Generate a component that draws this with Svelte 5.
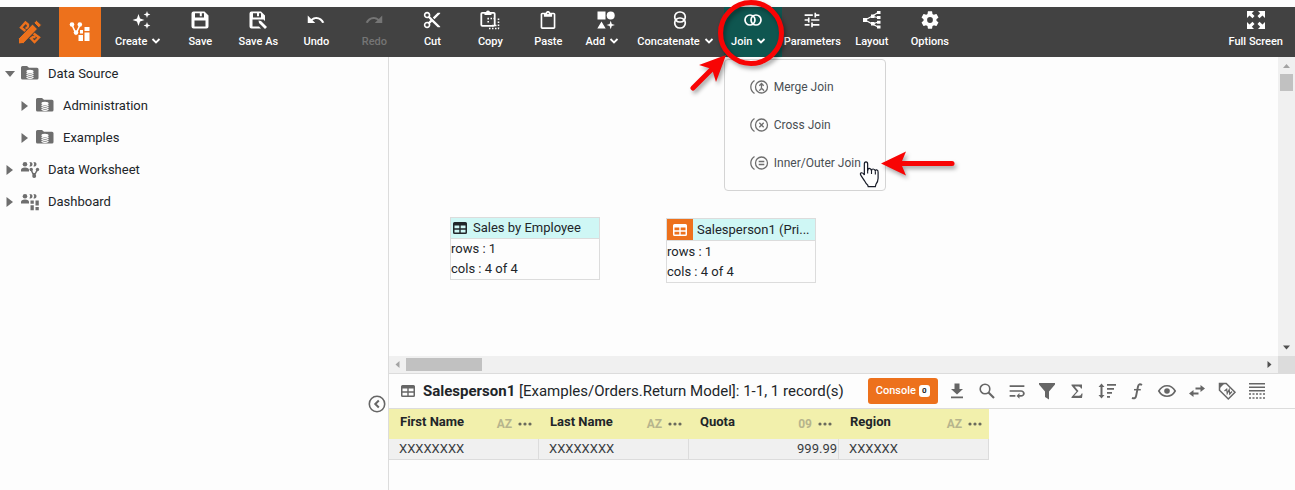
<script>
  const star = (x, y, r) => {
    const k = r * 0.26;
    return `<path d="M${x} ${y - r}L${x + k} ${y - k}L${x + r} ${y}L${x + k} ${y + k}L${x} ${y + r}L${x - k} ${y + k}L${x - r} ${y}L${x - k} ${y - k}z"/>`;
  };
  const g = (w, body) => `<g fill="none" stroke="currentColor" stroke-width="${w}">${body}</g>`;
  const drum = '<g fill="none" stroke="#fdfdfd" stroke-width="1.2"><ellipse cx="9" cy="6.500" rx="3" ry="1.200" fill="#fdfdfd"/><path d="M5.500 8.300q3.500 2.200 7 0M5.500 10.300q3.500 2.200 7 0M5.500 12.200q3.500 2.200 7 0"/></g>';
  const people = '<circle cx="4" cy="3.2" r="2.3"/><path d="M0 10.5V9q0-2.600 4-2.600t4 2.600v1.500z"/><path d="M8.500 1q3 0 3 2.300t-3 2.300q1.600-2.300 0-4.600zM12.500 1q3 0 3 2.300t-3 2.300q1.600-2.300 0-4.600z"/>';
  const venn = '<path d="M4.500 2.500Q.8 5 .8 9T4.500 15.500"/><circle cx="11.500" cy="9" r="6"/>';

  const icons = {
    create: [18, star(5.5, 9, 6) + star(14, 3.5, 3.4) + star(14, 14.5, 3.4)],
    save: [18, '<path fill-rule="evenodd" d="M2.500.5h11L17.500 4.500V15.500a2 2 0 0 1-2 2H2.500a2 2 0 0 1-2-2V2.500A2 2 0 0 1 2.500.5zM4 2.300v4.200h9V2.300h-2.200v3H8.800v-3zM3.500 9.500v6h11v-6z"/>'],
    saveas: [18, '<path fill-rule="evenodd" d="M2.500.5h9.500L16 4.500V10l-1.500-1.500H3.500v7H10l2 2H2.500a2 2 0 0 1-2-2V2.500a2 2 0 0 1 2-2zM4 2.300v4.200h8V2.300h-2v3H8v-3z"/><path d="M9.500 9.500l2.500.6 6 6-2 2-6-6z"/>'],
    undo: [24, '<path d="M12.500 8c-2.650 0-5.050.99-6.900 2.600L1 6v10h10l-3.620-3.620c1.390-1.160 3.160-1.880 5.120-1.880 3.540 0 6.550 2.310 7.600 5.500l3-.78C21.080 11.030 17.150 8 12.500 8z"/>'],
    redo: [24, '<g transform="translate(24 0) scale(-1 1)"><path d="M12.500 8c-2.650 0-5.050.99-6.900 2.600L1 6v10h10l-3.620-3.620c1.390-1.160 3.160-1.880 5.120-1.880 3.540 0 6.550 2.310 7.600 5.500l3-.78C21.080 11.030 17.150 8 12.500 8z"/></g>'],
    cut: [22, '<g transform="translate(-1 -1)"><path d="M9.640 7.640c.23-.5.36-1.050.36-1.640 0-2.210-1.790-4-4-4S2 3.790 2 6s1.790 4 4 4c.59 0 1.140-.13 1.640-.36L10 12l-2.360 2.360C7.140 14.130 6.590 14 6 14c-2.210 0-4 1.790-4 4s1.790 4 4 4 4-1.790 4-4c0-.59-.13-1.140-.36-1.640L12 14l7 7h3v-1L9.640 7.640zM6 8c-1.100 0-2-.89-2-2s.9-2 2-2 2 .89 2 2-.9 2-2 2zm0 12c-1.100 0-2-.89-2-2s.9-2 2-2 2 .89 2 2-.9 2-2 2zM19 3l-6 6 2 2 7-7V3z"/></g>'],
    copy: [18, g(1.8, '<rect x=".3" y="1.800" width="13.400" height="13" rx="1"/>') + '<path d="M3.500 4V1.500H5a2 2 0 0 1 4 0h1.500V4z"/>' + g(1.6, '<path stroke-dasharray="1.500 1.500" d="M6.500 7.500H14M7.200 7v5M8 17.500h10M17.500 7.500v10M11 14.500h6"/>')],
    paste: [22, '<g transform="translate(-1 0)"><path d="M19 2h-4.180C14.400.84 13.300 0 12 0c-1.300 0-2.400.84-2.820 2H5c-1.100 0-2 .9-2 2v16c0 1.100.9 2 2 2h14c1.100 0 2-.9 2-2V4c0-1.100-.9-2-2-2zm-7 0c.55 0 1 .45 1 1s-.45 1-1 1-1-.45-1-1 .45-1 1-1zm7 18H5V4h2v3h10V4h2v16z"/></g>'],
    add: [18, '<path d="M.5.5h8v8h-8zM4.500 10.500L8.700 17.500H.3z"/><circle cx="13.700" cy="4.500" r="4"/>' + star(13.7, 14, 4.2)],
    concat: [18, g(1.7, '<rect x="3.700" y="1" width="10.600" height="10" rx="5"/><rect x="3.700" y="7" width="10.600" height="10" rx="5"/>')],
    join: [18, g(1.7, '<circle cx="6" cy="9" r="5"/><circle cx="12" cy="9" r="5"/>')],
    params: [22, '<g transform="translate(-1 -1)"><path d="M3 17v2h6v-2H3zM3 5v2h10V5H3zm10 16v-2h8v-2h-8v-2h-2v6h2zM7 9v2H3v2h4v2h2V9H7zm14 4v-2H11v2h10zm-6-4h2V7h4V5h-4V3h-2v6z"/></g>'],
    layout: [18, '<path d="M0 7h4v4H0zM8 3.500h3.500V7H8zM8 11h3.500v3.500H8zM14 0h3.500v3H14zM14 5h3.500v3H14zM14 9.700h3.500v3H14zM14 14.500h3.500v3H14z"/>' + g(1.2, '<path d="M2 9L9.500 5 15 1.500M9.500 5.500L15 6.500M2 9l7.500 4L15 11M9.500 13L15 16"/>')],
    options: [20, '<g transform="translate(-2 -2)"><path fill-rule="evenodd" d="M19.140 12.940c.04-.3.060-.61.060-.94 0-.32-.02-.64-.07-.94l2.030-1.580c.18-.14.23-.41.120-.61l-1.920-3.320c-.12-.22-.37-.29-.59-.22l-2.390.96c-.5-.38-1.030-.7-1.620-.94l-.36-2.540c-.04-.24-.24-.41-.48-.41h-3.840c-.24 0-.43.17-.47.41l-.36 2.540c-.59.24-1.130.57-1.620.94l-2.390-.96c-.22-.08-.47 0-.59.22L2.740 8.870c-.12.210-.08.47.120.61l2.030 1.580c-.05.3-.09.63-.09.94s.02.64.070.94l-2.030 1.580c-.18.140-.23.410-.12.610l1.920 3.320c.12.220.37.290.59.220l2.390-.96c.5.38 1.030.7 1.620.94l.36 2.540c.05.240.24.410.48.410h3.840c.24 0 .44-.17.470-.41l.36-2.540c.59-.24 1.130-.56 1.620-.94l2.390.96c.22.080.47 0 .59-.22l1.920-3.320c.12-.22.070-.47-.12-.61l-2.010-1.580zM12 15.200a3.200 3.200 0 1 1 0-6.400 3.200 3.200 0 0 1 0 6.400z"/></g>'],
    full: [18, '<path d="M0 0h7L4.800 2.200 7.500 5 5.500 7.200 2.500 4.500 0 7zM18 0v7l-2.500-2.500-3 2.700-2-2.200 2.700-2.800L11 0zM0 18v-7l2.500 2.500 3-2.700 2 2.200-2.700 2.800L7 18zM18 18h-7l2.200-2.200-2.700-2.800 2-2.200 3 2.700L18 11z"/>'],
    logo: [24, g(2.4, '<path d="M8.500 12L3 7.500 7.500 2.500 10 4.500v3.500H7.500M15 13l6 4.500-4.500 4.500-3.500-3.500 2-1.500h2.500"/>') + '<path stroke="#424242" stroke-width="1" d="M.5 18.500L14.500 4l5 5L5.500 23.500.5 24zM15.800 2.800L18.500.3 23.500 5l-2.700 2.800z"/>'],
    board: [20, g(1.6, '<path d="M2 3l4 8.500L10 3"/>') + '<circle cx="2" cy="2.500" r="2.300"/><circle cx="9.800" cy="2.500" r="2.300"/><circle cx="6" cy="10.500" r="2.300"/><path d="M8.500 13h4.500v6H8.500zM14.500 5h5v4h-5zM14.500 10.500h5V19h-5zM10 8h3v3.500h-3z"/>'],
    folder: [18, '<path d="M0 2.500A1.500 1.500 0 0 1 1.500 1H6l2 1.700h8A1.500 1.500 0 0 1 17.500 4.200v8.800A1.500 1.500 0 0 1 16 14.500H1.500A1.500 1.500 0 0 1 0 13z"/>' + drum],
    worksheet: [18, people + g(1.5, '<path d="M10 8.500l3 6.500 3.500-6.500M13 12v4"/>') + '<circle cx="10.200" cy="8.500" r="1.700"/><circle cx="16.500" cy="8.500" r="1.700"/><circle cx="13.200" cy="15" r="2"/>'],
    dashboard: [18, people + '<path d="M9.500 7.500h3.300v3.300H9.500zM14.500 7.500h3.300v5h-3.300zM9.500 12.300h3.300v5H9.500zM14.500 14h3.300v3.300h-3.300z"/>'],
    merge: [18, g(1.3, venn + '<path d="M9 12.500q2.500-1 2.500-3V5.500M9.300 7.700L11.500 5.500l2.200 2.200M12 10.500l2 2.200"/>')],
    cross: [18, g(1.3, venn + '<path d="M9.300 6.800l4.400 4.400M13.700 6.800l-4.400 4.400"/>')],
    inner: [18, g(1.3, venn + '<path d="M8.700 7.500h5.600M8.700 10.500h5.600"/>')],
    grid: [14, '<path fill-rule="evenodd" d="M1.500 1h11A1.500 1.500 0 0 1 14 2.500v9a1.500 1.500 0 0 1-1.500 1.500h-11A1.500 1.500 0 0 1 0 11.500v-9A1.500 1.500 0 0 1 1.500 1zM1.500 4.500v2.800h4.800V4.500zM7.700 4.500v2.800h4.800V4.500zM1.500 8.700v2.800h4.800V8.700zM7.700 8.700v2.800h4.800V8.700z"/>'],
    download: [18, '<path d="M6.500 1.500h5V7H15l-6 5.500L3 7h3.500zM3 14.500h12v1.700H3z"/>'],
    search: [18, g(1.6, '<circle cx="7" cy="7" r="4.800"/>') + g(2.1, '<path d="M10.500 10.500l5.500 5.500"/>')],
    wrap: [22, '<g transform="translate(-1 -1)"><path d="M3 19h7v-2H3v2zM21 5H3v2h18V5zm-4 6H3v2h14.250c1.100 0 2 .9 2 2s-.9 2-2 2H15v-2.500l-3.500 3.500 3.500 3.500v-2.500h2c2.210 0 4.500-1.790 4.500-4s-2.290-4-4.500-4z"/></g>'],
    filter: [18, '<path d="M1 1h16v1.500L11 9.500V17.500L7 15V9.500L1 2.500z"/>'],
    sigma: [18, '<path d="M3.500 2.500H14v4h-1q-.5-2-2.500-2H6.700L10.500 9l-4.300 4.700H11q2 0 2.600-2.200h1L14 16H3.500v-1l5-5.500-5-6z"/>'],
    spacing: [18, '<path d="M3.500 1.500L6.500 5H4.500v8h2l-3 3.500L.5 13h2V5h-2zM9 2h9v1.700H9zM9 6h7v1.700H9zM9 10h5v1.700H9zM9 14h3v1.700H9z"/>'],
    fn: [18, g(1.9, '<path d="M14 3Q10.800 1 10 4.500L8.200 13.500Q7.500 17.500 4 15.800"/>') + g(1.5, '<path d="M6 7.700h6.800"/>')],
    eye: [18, g(1.6, '<path d="M.8 9Q3.800 3.700 9 3.700T17.200 9Q14.200 14.300 9 14.300T.8 9z"/>') + '<circle cx="9" cy="9" r="2.800"/>'],
    swap: [18, '<path d="M12.500 3L17 6.500 12.500 10V7.400H7.500V5.600H12.500zM5.500 8L1 11.500 5.500 15V12.400H10.500V10.600H5.500z"/>'],
    tag: [18, g(1.5, '<path d="M1.500 1.500h6.700L17 10.300 10.300 17 1.500 8.200z"/>') + g(1.2, '<path d="M6.500 9l2.200-1.800.5 4.300 2-4 .5 4.500 2.300-2.500"/>') + '<path d="M1 1h6L1 7z"/>'],
    rows: [18, '<path d="M1 1h16v1.600H1zM1 4.500h16v1.600H1zM1 8h16v1.600H1z"/>' + g(1.5, '<path stroke-dasharray="2 1.500" d="M1 12h16M1 16h16"/>')],
    collapse: [18, g(1.6, '<circle cx="9" cy="9" r="7.700"/>') + g(2, '<path d="M10.800 5.500L7.300 9l3.500 3.500"/>')]
  };

  const tools = [
    ['create', 'Create', true], ['save', 'Save'], ['saveas', 'Save As'], ['undo', 'Undo'],
    ['redo', 'Redo'], ['cut', 'Cut'], ['copy', 'Copy'], ['paste', 'Paste'], ['add', 'Add', true],
    ['concat', 'Concatenate', true], ['join', 'Join', true], ['params', 'Parameters'],
    ['layout', 'Layout'], ['options', 'Options']
  ];
  const joins = [['merge', 'Merge Join'], ['cross', 'Cross Join'], ['inner', 'Inner/Outer Join']];
  const tree = [
    ['folder', 'Data Source', 0, true], ['folder', 'Administration', 1], ['folder', 'Examples', 1],
    ['worksheet', 'Data Worksheet', 0], ['dashboard', 'Dashboard', 0]
  ];
  const actions = [
    ['download', 'Export'], ['search', 'Search'], ['wrap', 'Wrap headers'], ['filter', 'Filter'],
    ['sigma', 'Aggregate'], ['spacing', 'Sort'], ['fn', 'Expression'], ['eye', 'Visibility'],
    ['swap', 'Reorder'], ['tag', 'Rename'], ['rows', 'Row limit']
  ];
  const columns = [
    ['First Name', 'AZ', 'XXXXXXXX'], ['Last Name', 'AZ', 'XXXXXXXX'],
    ['Quota', '09', '999.99'], ['Region', 'AZ', 'XXXXXX']
  ];
</script>

{#snippet icon(name, size = 18)}
  <svg class="icon" width={size} height={size} viewBox="0 0 {icons[name][0]} {icons[name][0]}" fill="currentColor" aria-hidden="true">{@html icons[name][1]}</svg>
{/snippet}

<div class="app">
  <header class="toolbar">
    <button class="brand" aria-label="Home">{@render icon('logo', 24)}</button>
    <button class="brand active" aria-label="Worksheet">{@render icon('board', 20)}</button>
    <nav class="tools">
      {#each tools as [name, label, menu]}
        <div class="slot">
          <button class="tool" class:open={name === 'join'} disabled={name === 'redo'}>
            {@render icon(name)}
            <span class="label">{label}{#if menu}<svg class="caret" width="10" height="8" viewBox="0 0 10 8" aria-hidden="true"><path d="M1.500 2L5 5.500 8.500 2" fill="none" stroke="currentColor" stroke-width="1.800" /></svg>{/if}</span>
          </button>
          {#if name === 'join'}
            <div class="menu">
              {#each joins as [kind, text]}
                <button class="choice">{@render icon(kind)}{text}</button>
              {/each}
            </div>
            <svg class="marks" width="300" height="200" viewBox="0 0 300 200" aria-hidden="true">
              <g class="red">
                <circle cx="67" cy="33" r="30.500" fill="none" stroke="#f80404" stroke-width="5" />
                <path d="M9 88L30 67" stroke="#f80404" stroke-width="5" stroke-linecap="round" />
                <path d="M42 55L32 82 28 69 15 65z" fill="#f80404" />
                <path d="M268 163.500H218" stroke="#f80404" stroke-width="5" stroke-linecap="round" />
                <path d="M197 163.500L222 151.500 217 163.500 222 175.500z" fill="#f80404" />
              </g>
              <g transform="translate(-19.300 -18) scale(1.100)">
                <path d="M181.500 165.500q0-2 1.500-2t1.500 2v6q0-2 1.500-2t2 2q0-1.500 1.500-1.500t2 2q0-1.500 1.300-1.200t1.200 2.200v5.500q0 3-2 5.500l-.5 2h-6.500l-.5-1.500q-1.500-1-3-4l-3-4.500q-1.300-2 .2-2.500t2.800 2z" fill="#fff" stroke="#181c28" stroke-width="1.100" />
                <path d="M184.500 169v5M188 171v3.500M191.500 172v3" fill="none" stroke="#181c28" />
              </g>
            </svg>
          {/if}
        </div>
      {/each}
    </nav>
    <button class="tool screen">{@render icon('full')}<span class="label">Full Screen</span></button>
  </header>

  <div class="body">
    <aside class="side">
      <ul class="tree">
        {#each tree as [name, text, level, open]}
          <li class="node" class:child={level === 1}>
            <svg class="twist" width="10" height="10" viewBox="0 0 10 10" aria-hidden="true"><path d={open ? 'M0 2h10L5 8z' : 'M1.500 0L8 5 1.500 10z'} /></svg>
            {@render icon(name)}
            <span>{text}</span>
          </li>
        {/each}
      </ul>
      <button class="collapse" aria-label="Collapse panel">{@render icon('collapse')}</button>
    </aside>

    <main class="main">
      <section class="scroller">
        <div class="canvas">
          <article class="table-box first">
            <h3><span class="kind">{@render icon('grid', 14)}</span><span class="name">Sales by Employee</span></h3>
            <p>rows : 1</p>
            <p>cols : 4 of 4</p>
          </article>
          <article class="table-box second">
            <h3><span class="kind hot">{@render icon('grid', 14)}</span><span class="name">Salesperson1 (Pri...</span></h3>
            <p>rows : 1</p>
            <p>cols : 4 of 4</p>
          </article>
        </div>
        <div class="bar vertical">
          <svg width="17" height="17" viewBox="0 0 17 17"><path d="M5 11h7L8.500 7z" fill="#a3a3a3" /></svg>
          <i></i>
          <svg class="end" width="17" height="17" viewBox="0 0 17 17"><path d="M5 6.500h7l-3.500 4z" fill="#505050" /></svg>
        </div>
        <div class="bar horizontal">
          <svg width="17" height="17" viewBox="0 0 17 17"><path d="M10.500 5v7L6.500 8.500z" fill="#a3a3a3" /></svg>
          <i></i>
          <svg class="end" width="17" height="17" viewBox="0 0 17 17"><path d="M6.500 5v7l4-3.500z" fill="#505050" /></svg>
        </div>
        <div class="corner"></div>
      </section>

      <section class="preview">
        <div class="preview-bar">
          {@render icon('grid', 14)}
          <h2><b>Salesperson1</b> [Examples/Orders.Return Model]: 1-1, 1 record(s)</h2>
          <button class="console">Console<span class="count">0</span></button>
          <div class="actions">
            {#each actions as [name, label]}
              <button class="action" aria-label={label}>{@render icon(name)}</button>
            {/each}
          </div>
        </div>
        <table>
          <thead>
            <tr>
              {#each columns as [title, kind]}
                <th><div class="head"><span class="title">{title}</span><span class="sort">{kind}</span><svg class="more" width="14" height="4" viewBox="0 0 14 4" fill="#6a6a5c" aria-hidden="true"><circle cx="2" cy="2" r="1.600" /><circle cx="7" cy="2" r="1.600" /><circle cx="12" cy="2" r="1.600" /></svg></div></th>
              {/each}
            </tr>
          </thead>
          <tbody>
            <tr>
              {#each columns as [title, kind, value]}
                <td class:number={kind === '09'}>{value}</td>
              {/each}
            </tr>
          </tbody>
        </table>
      </section>
    </main>
  </div>
</div>

<style>
  :global(body) { background: #fdfdfd; }
  .app {
    box-sizing: border-box;
    min-height: 100vh;
    padding-top: 7px;
    display: flex;
    flex-direction: column;
    font: 13px/20px Roboto, sans-serif;
    color: #212529;
  }
  button { margin: 0; padding: 0; border: 0; background: none; font: inherit; color: inherit; }
  h2, h3, p, ul { margin: 0; padding: 0; font: inherit; }
  .icon { display: block; flex: none; overflow: visible; }

  .toolbar { display: flex; height: 50px; background: #424242; color: #fff; }
  .brand { display: flex; align-items: center; justify-content: center; width: 59px; color: #ed711c; }
  .brand.active { width: 42px; margin-right: 12px; background: #ed711c; color: #fff; }
  .tools { display: flex; flex: 1; }
  .slot { position: relative; display: flex; }
  .tool {
    display: flex;
    flex-direction: column;
    align-items: center;
    gap: 6px;
    min-width: 58px;
    padding: 4px 2px 0;
    font-size: 11px;
    font-weight: 500;
    line-height: 14px;
    white-space: nowrap;
  }
  .tool:disabled { color: #757575; }
  .tool.open { background: #0f5650; }
  .screen { padding-right: 12px; }
  .caret { margin: 0 8px 0 4px; }

  .menu {
    position: absolute;
    z-index: 2;
    top: 52px;
    left: 0;
    box-sizing: border-box;
    width: 162px;
    padding: 8px 0;
    border: 1px solid #d4d4d4;
    border-radius: 4px;
    background: #fdfdfd;
  }
  .choice {
    display: flex;
    align-items: center;
    gap: 6px;
    width: 100%;
    height: 38px;
    padding-left: 25px;
    font-size: 12px;
    color: #4a4f54;
    white-space: nowrap;
  }
  .choice .icon { color: #6e6e6e; }
  .marks { position: absolute; z-index: 3; top: -7px; left: -40px; pointer-events: none; }
  .red { filter: drop-shadow(2px 3px 2px rgba(0, 0, 0, 0.35)); }

  .body { display: flex; flex: 1; }
  .side { position: relative; flex: none; width: 388px; border-right: 1px solid #dcdcdc; }
  .tree { padding-top: 1px; list-style: none; }
  .node { display: flex; align-items: center; height: 32px; padding-left: 5px; color: #6e6e6e; }
  .node span { margin-left: 9px; color: #212529; }
  .twist { margin-right: 6px; fill: #6e6e6e; }
  .child { padding-left: 20px; }
  .collapse { position: absolute; top: 338px; right: 2px; color: #666; }

  .main { flex: 1; min-width: 0; }
  .scroller { display: grid; grid-template-columns: 1fr 17px; grid-template-rows: 299px 17px; border-bottom: 1px solid #dcdcdc; }
  .canvas { position: relative; overflow: hidden; }
  .bar { display: flex; background: #f0f0f0; }
  .bar i { background: #c1c1c1; }
  .vertical { flex-direction: column; }
  .vertical i { height: 17px; margin: 0 2px; }
  .horizontal i { width: 76px; margin: 2px 0; }
  .vertical .end { margin-top: auto; }
  .horizontal .end { margin-left: auto; }
  .corner { background: #dcdcdc; }

  .table-box { position: absolute; box-sizing: border-box; width: 150px; border: 1px solid #dcdcdc; }
  .first { top: 160px; left: 61px; }
  .second { top: 161px; left: 277px; }
  .table-box h3 { display: flex; height: 20px; border-bottom: 1px solid #dcdcdc; background: #cff7f5; }
  .second h3 { height: 21px; line-height: 21px; }
  .second p:first-of-type { padding-top: 1px; }
  .kind { display: flex; align-items: center; flex: none; padding: 0 6px 0 2px; }
  .kind.hot { margin-right: 4px; padding: 0 6px; background: #ed711c; color: #fff; }
  .name { white-space: nowrap; }

  .preview-bar { display: flex; align-items: center; height: 34px; padding-left: 12px; border-bottom: 1px solid #dcdcdc; color: #666; }
  h2 { margin-left: 8px; font-size: 15px; color: #212529; white-space: nowrap; }
  b { font-weight: 700; }
  .console {
    display: flex;
    align-items: center;
    gap: 3px;
    height: 26px;
    margin: 0 4px 0 24px;
    padding: 0 8px;
    border-radius: 3px;
    background: #ed711c;
    color: #fff;
    font-size: 11px;
    font-weight: 500;
  }
  .count { padding: 0 3px; border-radius: 3px; background: #fff; color: #212529; font-size: 8px; font-weight: 700; line-height: 12px; }
  .actions { display: flex; }
  .action { display: flex; justify-content: center; width: 30px; }

  table { border-collapse: separate; border-spacing: 0; table-layout: fixed; width: 600px; }
  th { height: 30px; padding: 0; background: #f2f0ac; text-align: left; vertical-align: top; font-weight: 500; }
  .head { display: flex; align-items: center; gap: 6px; height: 26px; padding: 0 7px 0 11px; }
  .title { flex: 1; font-weight: 700; }
  .sort { padding-top: 3px; color: #b7b58c; font-size: 12px; font-weight: 700; }
  .more { margin-top: 3px; }
  td {
    box-sizing: border-box;
    height: 21px;
    padding: 0 0 0 10px;
    border-right: 1px solid #dcdcdc;
    border-bottom: 1px solid #dcdcdc;
    background: #f0f0f0;
    color: #383c40;
  }
  .number { padding-right: 1px; text-align: right; }
</style>
